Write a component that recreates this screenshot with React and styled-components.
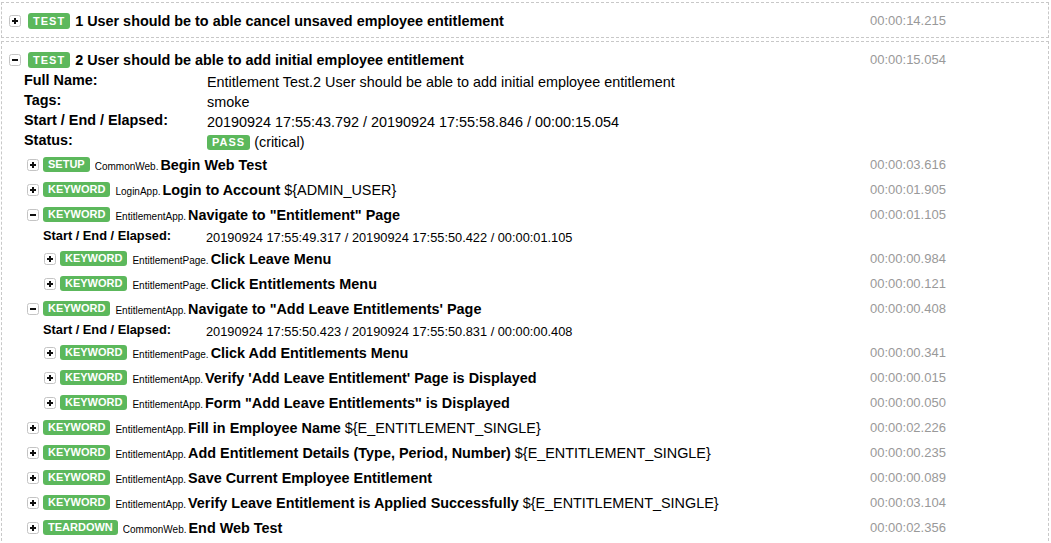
import React from "react";
import styled, { createGlobalStyle } from "styled-components";

const Global = createGlobalStyle`
  html, body { margin: 0; padding: 0; background: #fff; overflow: hidden; }
  body { font-family: "Liberation Sans", Arial, Helvetica, sans-serif; color: #000; }
`;

const Page = styled.div`
  padding: 2px 2px 0 1px;
`;

const TestBox = styled.div`
  border: 1px dashed #c8c8c8;
  padding: 6px 0 5px 7px;
  margin-bottom: 3px;
`;

const HeaderRow = styled.div`
  display: flex;
  align-items: center;
  height: ${(p) => p.$h}px;
`;

const ToggleBox = styled.svg`
  flex-shrink: 0;
  display: block;
  margin-right: ${(p) => p.$gap}px;
`;

const Label = styled.span`
  flex-shrink: 0;
  display: inline-block;
  background: #5cb85c;
  color: #fff;
  font-weight: bold;
  font-size: 11px;
  border-radius: 3px;
  padding: 0 5px;
  line-height: ${(p) => (p.$big ? 16 : 15)}px;
  letter-spacing: ${(p) => (p.$spaced ? 1 : 0)}px;
  margin-right: ${(p) => p.$gap ?? 0}px;
`;

const NameLine = styled.div`
  flex: 1;
  min-width: 0;
  white-space: nowrap;
  overflow: hidden;
  font-size: 14.4px;
`;

const ParentName = styled.span`
  font-size: 10px;
  margin-right: 2px;
`;

const Name = styled.span`
  font-weight: bold;
`;

const Args = styled.span`
  font-weight: normal;
`;

const Elapsed = styled.div`
  flex-shrink: 0;
  width: 178px;
  font-size: 13px;
  color: #999;
`;

const Children = styled.div`
  margin-left: ${(p) => p.$indent}px;
`;

const MetaTable = styled.div`
  display: grid;
  grid-template-columns: ${(p) => p.$labelW}px 1fr;
  font-size: ${(p) => p.$fs}px;
  margin-left: ${(p) => p.$indent}px;
  padding-top: ${(p) => p.$pt ?? 0}px;
  padding-bottom: ${(p) => p.$pb ?? 0}px;
`;

const MetaLabel = styled.div`
  font-weight: bold;
  line-height: ${(p) => p.$lh}px;
  height: ${(p) => p.$rowH}px;
`;

const MetaValue = styled.div`
  line-height: ${(p) => p.$lh}px;
  padding-top: 2px;
  white-space: nowrap;
`;

const StatusValue = styled.div`
  display: flex;
  align-items: center;
  gap: 4px;
  height: 18px;
  padding-top: 2px;
`;

function Toggle({ open, gap }) {
  return (
    <ToggleBox $gap={gap} width="12" height="12" viewBox="0 0 12 12">
      <rect x="0.5" y="0.5" width="11" height="11" rx="2" fill="#fff" stroke="#c4c4c4" />
      <rect x="3" y="5" width="6" height="2" fill="#111" />
      {!open && <rect x="5" y="3" width="2" height="6" fill="#111" />}
    </ToggleBox>
  );
}

function Keyword({ kw }) {
  return (
    <div>
      <HeaderRow $h={25}>
        <Toggle open={!!kw.children} gap={4} />
        <Label $gap={5}>{kw.type}</Label>
        <NameLine>
          <ParentName>{kw.lib}.</ParentName>
          <Name>{kw.name}</Name>
          {kw.args && <Args> {kw.args}</Args>}
        </NameLine>
        <Elapsed>{kw.elapsed}</Elapsed>
      </HeaderRow>
      {kw.children && (
        <>
          <MetaTable $labelW={163} $fs={12.8} $indent={16} $pt={1}>
            <MetaLabel $lh={16} $rowH={18}>Start / End / Elapsed:</MetaLabel>
            <MetaValue $lh={16}>{kw.times}</MetaValue>
          </MetaTable>
          <Children $indent={17}>
            {kw.children.map((c, i) => (
              <Keyword key={i} kw={c} />
            ))}
          </Children>
        </>
      )}
    </div>
  );
}

const ARG = "${E_ENTITLEMENT_SINGLE}";

const keywords = [
  { type: "SETUP", lib: "CommonWeb", name: "Begin Web Test", elapsed: "00:00:03.616" },
  { type: "KEYWORD", lib: "LoginApp", name: "Login to Account", args: "${ADMIN_USER}", elapsed: "00:00:01.905" },
  {
    type: "KEYWORD",
    lib: "EntitlementApp",
    name: 'Navigate to "Entitlement" Page',
    elapsed: "00:00:01.105",
    times: "20190924 17:55:49.317 / 20190924 17:55:50.422 / 00:00:01.105",
    children: [
      { type: "KEYWORD", lib: "EntitlementPage", name: "Click Leave Menu", elapsed: "00:00:00.984" },
      { type: "KEYWORD", lib: "EntitlementPage", name: "Click Entitlements Menu", elapsed: "00:00:00.121" },
    ],
  },
  {
    type: "KEYWORD",
    lib: "EntitlementApp",
    name: "Navigate to \"Add Leave Entitlements' Page",
    elapsed: "00:00:00.408",
    times: "20190924 17:55:50.423 / 20190924 17:55:50.831 / 00:00:00.408",
    children: [
      { type: "KEYWORD", lib: "EntitlementPage", name: "Click Add Entitlements Menu", elapsed: "00:00:00.341" },
      { type: "KEYWORD", lib: "EntitlementApp", name: "Verify 'Add Leave Entitlement' Page is Displayed", elapsed: "00:00:00.015" },
      { type: "KEYWORD", lib: "EntitlementApp", name: 'Form "Add Leave Entitlements" is Displayed', elapsed: "00:00:00.050" },
    ],
  },
  { type: "KEYWORD", lib: "EntitlementApp", name: "Fill in Employee Name", args: ARG, elapsed: "00:00:02.226" },
  { type: "KEYWORD", lib: "EntitlementApp", name: "Add Entitlement Details (Type, Period, Number)", args: ARG, elapsed: "00:00:00.235" },
  { type: "KEYWORD", lib: "EntitlementApp", name: "Save Current Employee Entitlement", elapsed: "00:00:00.089" },
  { type: "KEYWORD", lib: "EntitlementApp", name: "Verify Leave Entitlement is Applied Successfully", args: ARG, elapsed: "00:00:03.104" },
  { type: "TEARDOWN", lib: "CommonWeb", name: "End Web Test", elapsed: "00:00:02.356" },
];

function TestHeader({ open, name, elapsed }) {
  return (
    <HeaderRow $h={23}>
      <Toggle open={open} gap={7} />
      <Label $big $spaced $gap={5}>TEST</Label>
      <NameLine>
        <Name>{name}</Name>
      </NameLine>
      <Elapsed>{elapsed}</Elapsed>
    </HeaderRow>
  );
}

export default function App() {
  return (
    <>
      <Global />
      <Page>
        <TestBox>
          <TestHeader
            open={false}
            name="1 User should be to able cancel unsaved employee entitlement"
            elapsed="00:00:14.215"
          />
        </TestBox>
        <TestBox>
          <TestHeader
            open
            name="2 User should be able to add initial employee entitlement"
            elapsed="00:00:15.054"
          />
          <MetaTable $labelW={183} $fs={14.4} $indent={15} $pb={1}>
            <MetaLabel $lh={18} $rowH={20}>Full Name:</MetaLabel>
            <MetaValue $lh={18}>Entitlement Test.2 User should be able to add initial employee entitlement</MetaValue>
            <MetaLabel $lh={18} $rowH={20}>Tags:</MetaLabel>
            <MetaValue $lh={18}>smoke</MetaValue>
            <MetaLabel $lh={18} $rowH={20}>Start / End / Elapsed:</MetaLabel>
            <MetaValue $lh={18}>20190924 17:55:43.792 / 20190924 17:55:58.846 / 00:00:15.054</MetaValue>
            <MetaLabel $lh={18} $rowH={20}>Status:</MetaLabel>
            <StatusValue>
              <Label $spaced>PASS</Label>
              <span>(critical)</span>
            </StatusValue>
          </MetaTable>
          <Children $indent={18}>
            {keywords.map((k, i) => (
              <Keyword key={i} kw={k} />
            ))}
          </Children>
        </TestBox>
      </Page>
    </>
  );
}
